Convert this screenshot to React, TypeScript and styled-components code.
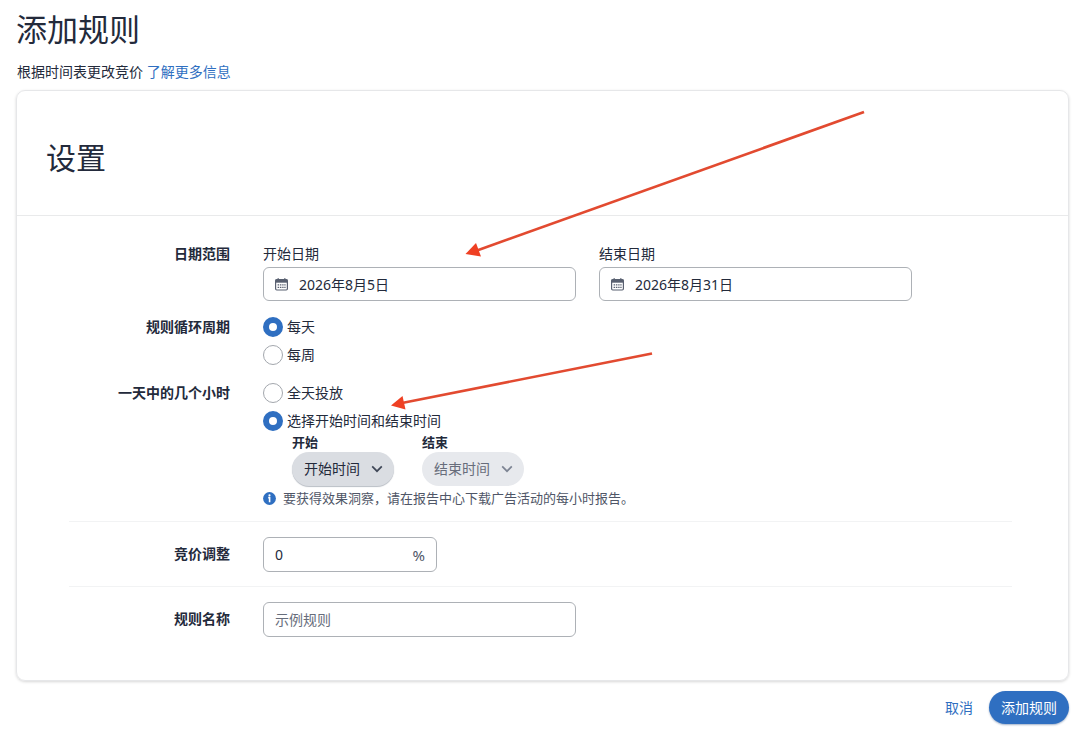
import React from 'react';
import styled, { createGlobalStyle } from 'styled-components';

const color = {
  ink: '#232a3b',
  muted: '#4f5667',
  faint: '#676d7b',
  blue: '#2f6fc1',
  border: '#adb1b6',
  line: '#e9eaeb',
  arrow: '#e24a30',
};

const GlobalStyle = createGlobalStyle`
  * { box-sizing: border-box; }
  body {
    margin: 0;
    background: #fff;
    color: ${color.ink};
    font-family: "Noto Sans", "Noto Sans CJK SC", sans-serif;
    font-size: 14px;
    line-height: 20px;
  }
  input, select, button { font: inherit; color: inherit; margin: 0; }
`;

const Page = styled.main`
  position: relative;
  padding: 7px 11px 8px 16px;
`;

const Title = styled.h1`
  margin: 0;
  font-size: 31px;
  line-height: 44px;
  font-weight: 400;
`;

const Subtitle = styled.p`
  margin: 11px 0 8px;
  padding-left: 1px;
`;

const Link = styled.a`
  color: ${color.blue};
  text-decoration: none;
`;

const Card = styled.section`
  border: 1px solid #e6e7e9;
  border-radius: 9px;
  box-shadow: 0 1px 3px rgba(0, 0, 0, 0.16);
`;

const CardHeader = styled.header`
  padding: 45px 29px 35px;
  border-bottom: 1px solid ${color.line};
`;

const CardTitle = styled.h2`
  margin: 0;
  font-size: 30px;
  line-height: 44px;
  font-weight: 400;
`;

const Form = styled.form`
  padding: 28px 56px 29px 52px;
`;

const Section = styled.div`
  padding: 15px 0 14px;
  border-top: 1px solid #f2f3f4;

  &:first-child {
    padding: 0 0 13px;
    border-top: 0;
  }
`;

const Row = styled.div`
  display: grid;
  grid-template-columns: 161px minmax(0, 1fr);
  column-gap: 33px;

  & + & { margin-top: 10px; }
`;

const RowLabel = styled.label<{ $line: number }>`
  text-align: right;
  font-weight: 700;
  line-height: ${(p) => p.$line}px;
`;

const Dates = styled.div`
  display: flex;
  gap: 23px;
  padding-bottom: 2px;
`;

const DateColumn = styled.div`
  flex: 0 1 313px;
  min-width: 0;
  display: flex;
  flex-direction: column;
  gap: 3px;
`;

const Field = styled.div<{ $width: number; $height?: number }>`
  display: flex;
  align-items: center;
  width: 100%;
  max-width: ${(p) => p.$width}px;
  height: ${(p) => p.$height ?? 35}px;
  padding: 0 11px;
  border: 1px solid ${color.border};
  border-radius: 6px;
  background: #fff;
`;

const FieldIcon = styled.svg`
  flex: none;
  width: 13px;
  height: 13px;
  margin-right: 11px;
`;

const TextInput = styled.input`
  flex: 1;
  min-width: 0;
  height: 24px;
  padding: 0;
  border: 0;
  outline: 0;
  background: transparent;

  &::placeholder { color: ${color.faint}; opacity: 1; }
`;

const Unit = styled.span`
  color: ${color.muted};
  font-size: 15px;
`;

const Choice = styled.label`
  display: flex;
  align-items: center;
  gap: 4px;
  height: 28px;
`;

const Radio = styled.input.attrs({ type: 'radio' })`
  appearance: none;
  flex: none;
  width: 20px;
  height: 20px;
  border: 1px solid #a3a7ad;
  border-radius: 50%;
  background: #fff;

  &:checked { border: 6px solid ${color.blue}; }
`;

const Times = styled.div`
  display: flex;
  gap: 28px;
  padding-left: 29px;
`;

const TimeColumn = styled.div`
  display: flex;
  flex-direction: column;
  gap: 3px;
`;

const TimeLabel = styled.label`
  font-size: 13px;
  line-height: 14px;
  font-weight: 700;
`;

const Pill = styled.div<{ $quiet?: boolean }>`
  display: grid;
  align-items: center;
  width: 102px;
  height: 34px;
  border-radius: 17px;
  color: ${(p) => (p.$quiet ? color.faint : color.ink)};
  background: ${(p) => (p.$quiet ? '#e7e9ed' : '#dadde2')};
  box-shadow: ${(p) => (p.$quiet ? 'none' : '0 1px 1px #b9bec5')};

  & > * { grid-area: 1 / 1; }
`;

const Select = styled.select`
  appearance: none;
  width: 100%;
  height: 34px;
  padding: 0 30px 0 12px;
  border: 0;
  border-radius: 17px;
  background: transparent;
  opacity: 1;
`;

const Chevron = styled.svg`
  justify-self: end;
  width: 12px;
  height: 8px;
  margin-right: 11px;
  pointer-events: none;
`;

const Hint = styled.p`
  display: flex;
  align-items: center;
  gap: 7px;
  margin: 2px 0 0;
  color: ${color.muted};
  font-size: 13px;
`;

const HintIcon = styled.svg`
  flex: none;
  width: 13px;
  height: 13px;
`;

const Actions = styled.footer`
  display: flex;
  justify-content: flex-end;
  align-items: center;
  gap: 4px;
  padding-top: 10px;
`;

const Button = styled.button<{ $primary?: boolean }>`
  height: 33px;
  padding: 0 12px;
  border: 0;
  border-radius: 17px;
  color: ${(p) => (p.$primary ? '#fff' : color.blue)};
  background: ${(p) => (p.$primary ? color.blue : 'transparent')};
  box-shadow: ${(p) => (p.$primary ? '0 1px 2px rgba(20, 60, 120, 0.4)' : 'none')};
`;

const Annotations = styled.svg`
  position: absolute;
  top: 0;
  left: 0;
  width: 900px;
  height: 440px;
  pointer-events: none;
`;

const CalendarIcon = () => (
  <FieldIcon viewBox="0 0 13 13" aria-hidden="true">
    <rect x="0.6" y="1.6" width="11.8" height="10.4" rx="1.2" fill="#fff" stroke="#596070" strokeWidth="1.2" />
    <path d="M0.5 1.5h12v3.2h-12z" fill="#596070" />
    <path d="M3.2 0.3v2M9.8 0.3v2" stroke="#596070" strokeWidth="1.4" />
    <path d="M2.6 6.9h1.6M5 6.9h1.4M7.2 6.9h1.4M9.3 6.9h1.3M2.6 9.3h1.6M5 9.3h1.4M7.2 9.3h1.4M9.3 9.3h1.3" stroke="#596070" strokeWidth="1.3" />
  </FieldIcon>
);

type DateFieldProps = { id: string; label: string; value: string };

const DateField = ({ id, label, value }: DateFieldProps) => (
  <DateColumn>
    <label htmlFor={id}>{label}</label>
    <Field $width={313} $height={34}>
      <CalendarIcon />
      <TextInput id={id} type="text" defaultValue={value} />
    </Field>
  </DateColumn>
);

type TimeFieldProps = { id: string; label: string; text: string; quiet?: boolean };

const TimeField = ({ id, label, text, quiet }: TimeFieldProps) => (
  <TimeColumn>
    <TimeLabel htmlFor={id}>{label}</TimeLabel>
    <Pill $quiet={quiet}>
      <Select id={id} disabled={quiet}>
        <option>{text}</option>
      </Select>
      <Chevron viewBox="0 0 12 8" aria-hidden="true">
        <path d="M1.2 1.4L6 6.2L10.8 1.4" fill="none" stroke={quiet ? '#7d8493' : '#3f4757'} strokeWidth="1.7" />
      </Chevron>
    </Pill>
  </TimeColumn>
);

export default function App() {
  return (
    <>
      <GlobalStyle />
      <Page>
        <Title>添加规则</Title>
        <Subtitle>
          根据时间表更改竞价 <Link href="#learn-more">了解更多信息</Link>
        </Subtitle>

        <Card>
          <CardHeader>
            <CardTitle>设置</CardTitle>
          </CardHeader>
          <Form id="rule-form">
            <Section>
              <Row>
                <RowLabel as="span" $line={20}>日期范围</RowLabel>
                <Dates>
                  <DateField id="start-date" label="开始日期" value="2026年8月5日" />
                  <DateField id="end-date" label="结束日期" value="2026年8月31日" />
                </Dates>
              </Row>
              <Row role="radiogroup" aria-labelledby="recurrence">
                <RowLabel as="span" id="recurrence" $line={28}>规则循环周期</RowLabel>
                <div>
                  <Choice><Radio name="recurrence" defaultChecked />每天</Choice>
                  <Choice><Radio name="recurrence" />每周</Choice>
                </div>
              </Row>
              <Row role="radiogroup" aria-labelledby="hours">
                <RowLabel as="span" id="hours" $line={28}>一天中的几个小时</RowLabel>
                <div>
                  <Choice><Radio name="hours" />全天投放</Choice>
                  <Choice><Radio name="hours" defaultChecked />选择开始时间和结束时间</Choice>
                  <Times>
                    <TimeField id="start-time" label="开始" text="开始时间" />
                    <TimeField id="end-time" label="结束" text="结束时间" quiet />
                  </Times>
                  <Hint>
                    <HintIcon viewBox="0 0 13 13" aria-hidden="true">
                      <circle cx="6.5" cy="6.5" r="6.4" fill={color.blue} />
                      <circle cx="6.5" cy="3.3" r="1.1" fill="#fff" />
                      <path d="M5.2 5.6h1.4v4.7" fill="none" stroke="#fff" strokeWidth="1.6" />
                    </HintIcon>
                    要获得效果洞察，请在报告中心下载广告活动的每小时报告。
                  </Hint>
                </div>
              </Row>
            </Section>

            <Section>
              <Row>
                <RowLabel htmlFor="bid" $line={34}>竞价调整</RowLabel>
                <Field $width={174}>
                  <TextInput id="bid" type="text" defaultValue="0" />
                  <Unit>%</Unit>
                </Field>
              </Row>
            </Section>

            <Section>
              <Row>
                <RowLabel htmlFor="rule-name" $line={34}>规则名称</RowLabel>
                <Field $width={313}>
                  <TextInput id="rule-name" type="text" placeholder="示例规则" />
                </Field>
              </Row>
            </Section>
          </Form>
        </Card>

        <Actions>
          <Button type="button">取消</Button>
          <Button type="submit" form="rule-form" $primary>添加规则</Button>
        </Actions>

        <Annotations viewBox="0 0 900 440" aria-hidden="true">
          <g stroke={color.arrow} strokeWidth="2.6">
            <path d="M864 112L477 250.500" />
            <path d="M652 353.500L402 403" />
          </g>
          <g fill="#ef4023">
            <path d="M465.500 254L476 243L481 256.500Z" />
            <path d="M391 405.500L402.500 396L405.500 409.500Z" />
          </g>
        </Annotations>
      </Page>
    </>
  );
}
